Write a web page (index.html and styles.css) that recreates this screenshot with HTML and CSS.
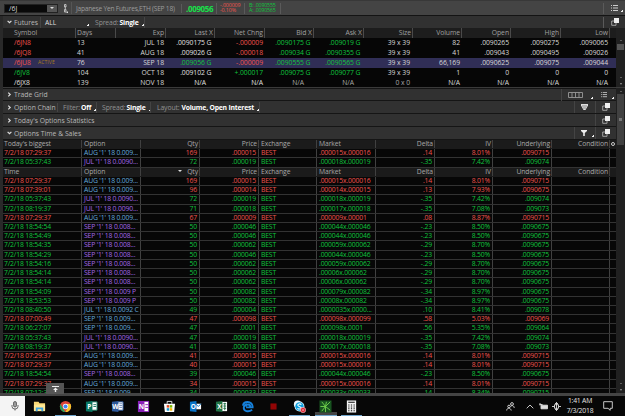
FILE: index.html
```html
<!DOCTYPE html>
<html lang="en">
<head>
  <meta charset="UTF-8" />
  <meta name="viewport" content="width=device-width, initial-scale=1" />
  <title>Options Time &amp; Sales</title>
  <link rel="stylesheet" href="styles.css">
</head>
<body>

<svg class="defs" width="0" height="0">
  <symbol id="popout" viewBox="0 0 8 8"><path d="M.7 3h4.3v4.3H.7z" fill="none" stroke="#bbb" stroke-width=".8"/><path d="M3 0h5v5H3z" fill="#eee"/></symbol>
  <symbol id="list" viewBox="0 0 7 7"><path d="M0 .5h1M2 .5h5M0 3h1M2 3h5M0 5.500h1M2 5.500h5" stroke="#ccc" stroke-width="1"/></symbol>
</svg>

<div class="app">
  <!-- Symbol toolbar -->
  <header class="toolbar">
    <div class="symbol-box"><span>/6J</span><i class="drop"></i></div>
    <div class="link-cell">
      <svg width="5" height="9" viewBox="0 0 5 9"><path d="M1.500 .5h1.500v2.500H1.500zM1.500 5.500h1.500V8H1.500zM2.300 2v4.500" fill="none" stroke="#bbb"/><path d="M5 7v2H3z" fill="#ddd"/></svg>
    </div>
    <div class="instrument">Japanese Yen Futures,ETH (SEP 18)</div>
    <div class="last-price">.009056</div>
    <div class="mini red">-.000009<br>-0.10%</div>
    <div class="mini bidask green">B: .0090555<br>A: .0090565</div>
    <div class="end-tool"><svg width="7" height="7"><use href="#list"/></svg><i class="corner"></i></div>
  </header>

  <!-- Futures -->
  <div class="bar futures-bar">
    <svg class="arrow" width="5" height="4" viewBox="0 0 5 4"><path d="M.6 .8l1.900 1.900L4.400 .8" fill="none" stroke="#ddd" stroke-width="1.200"/></svg>
    <span class="bar-name futures-name">Futures</span>
    <span class="opt all">ALL<i class="corner"></i></span>
    <span class="opt spread">Spread: <b>Single</b><i class="corner"></i></span>
    <div class="end-tool"><svg width="8" height="8"><use href="#popout"/></svg></div>
  </div>
  <section class="futures">
    <div class="futures-table" id="futures"></div>
    <div class="scroll small-scroll"><i class="up"></i><i class="thumb"></i><i class="up low"></i><i class="down"></i></div>
  </section>

  <!-- Collapsible sections -->
  <section class="main">
    <div class="panels">
      <div class="bar">
        <svg class="arrow" width="4" height="5" viewBox="0 0 4 5"><path d="M.8 .6l1.900 1.900L.8 4.400" fill="none" stroke="#ddd" stroke-width="1.200"/></svg>
        <span class="bar-name">Trade Grid</span>
        <div class="tools">
          <div class="tool wide"><svg width="15" height="6" viewBox="0 0 15 6"><path d="M.5 .5h14v5H.5zM4 .5v5M7.500 .5v5M11 .5v5" fill="none" stroke="#999" stroke-width=".9"/></svg><i class="corner"></i></div>
          <div class="tool"><svg width="6" height="6"><use href="#list"/></svg><i class="corner"></i></div>
        </div>
      </div>
      <div class="bar">
        <svg class="arrow" width="4" height="5" viewBox="0 0 4 5"><path d="M.8 .6l1.900 1.900L.8 4.400" fill="none" stroke="#ddd" stroke-width="1.200"/></svg>
        <span class="bar-name chain-name">Option Chain</span>
        <span class="opt filter">Filter: <b>Off</b><i class="corner"></i></span>
        <span class="opt chain-spread">Spread: <b>Single</b><i class="corner"></i></span>
        <span class="opt layout">Layout: <b>Volume, Open Interest</b><i class="corner"></i></span>
        <div class="tools">
          <div class="tool"><svg width="7" height="6" viewBox="0 0 7 6"><path d="M0 0h7v1.500L4.500 6h-2L0 1.500z" fill="#ddd"/><path d="M1 2h5M2 4h3" stroke="#555" stroke-width=".6"/></svg></div>
          <div class="tool"><svg width="8" height="8"><use href="#popout"/></svg></div>
        </div>
      </div>
      <div class="bar">
        <svg class="arrow" width="4" height="5" viewBox="0 0 4 5"><path d="M.8 .6l1.900 1.900L.8 4.400" fill="none" stroke="#ddd" stroke-width="1.200"/></svg>
        <span class="bar-name">Today's Options Statistics</span>
        <div class="tools"><div class="tool"><svg width="8" height="8"><use href="#popout"/></svg></div></div>
      </div>
      <div class="bar">
        <svg class="arrow" width="5" height="4" viewBox="0 0 5 4"><path d="M.6 .8l1.900 1.900L4.400 .8" fill="none" stroke="#ddd" stroke-width="1.200"/></svg>
        <span class="bar-name open-name">Options Time &amp; Sales</span>
        <div class="tools">
          <div class="tool"><svg width="6" height="6" viewBox="0 0 6 6"><path d="M0 0h6v1L3.800 3v3H2.200V3L0 1z" fill="#eee"/></svg><i class="corner"></i></div>
          <div class="tool"><svg width="8" height="8"><use href="#popout"/></svg></div>
        </div>
      </div>
      <div class="sales" id="sales"></div>
    </div>
    <div class="scroll main-scroll"><i class="up"></i><i class="thumb"></i><i class="up low"></i><i class="down"></i></div>
    <div class="dock-btn"><svg width="7" height="6" viewBox="0 0 7 6"><path d="M0 .5h7" stroke="#eee"/><path d="M3.500 1.500L6 4H4.200v2H2.800V4H1z" fill="#eee"/></svg></div>
  </section>
</div>

<!-- Taskbar -->
<footer class="taskbar">
  <div class="mic"><svg width="8" height="10" viewBox="0 0 8 10"><rect x="2.500" y=".5" width="3" height="5.500" rx="1.500" fill="#999" stroke="#444" stroke-width=".7"/><path d="M1 4v1.500a3 2.500 0 0 0 6 0V4M4 8v1.500" fill="none" stroke="#444" stroke-width=".8"/></svg></div>
  <div class="task-icons">
    <div class="task"><svg viewBox="0 0 14 14"><path d="M1 2h5l1 1.500h6V11H1z" fill="#f8d775"/><path d="M1 5h12v7H1z" fill="#ffe793"/><path d="M3 12V8h8v4H9v-2H5v2z" fill="#3fa4e0"/></svg></div>
    <div class="task running"><svg viewBox="0 0 14 14"><circle cx="7" cy="7" r="6" fill="#db4437"/><path d="M1.600 4.200L5 10.400 7 13A6 6 0 0 1 1.600 4.200z" fill="#27a35a"/><path d="M7 4.300h5.400A6 6 0 0 1 7 13l2.500-5z" fill="#f7c52d"/><circle cx="7" cy="7" r="2.900" fill="#fff"/><circle cx="7" cy="7" r="2.200" fill="#4285f4"/></svg></div>
    <div class="task office"><svg viewBox="0 0 14 14"><path d="M7 2h6v9H7z" fill="#fff" stroke="#14775f"/><path d="M1 2l7-1v12l-7-1z" fill="#087561"/><text x="2.500" y="9.500">P</text><path d="M9 5h3M9 7h3" stroke="#14775f"/></svg></div>
    <div class="task office"><svg viewBox="0 0 14 14"><path d="M7 2h6v9H7z" fill="#fff" stroke="#2b579a"/><path d="M1 2l7-1v12l-7-1z" fill="#2b579a"/><text x="1.300" y="9.500">W</text><path d="M9 4h3M9 6h3M9 8h3" stroke="#2b579a" stroke-width=".7"/></svg></div>
    <div class="task office"><svg viewBox="0 0 14 14"><path d="M1 1h12v12H1z" fill="#8a20b8"/><path d="M8 2h4v10H8z" fill="#fff"/><text x="2" y="10">N</text><path d="M9 5h3M9 8h3" stroke="#8a20b8"/></svg></div>
    <div class="task"><svg viewBox="0 0 14 14"><path d="M4.500 4V1.500h5V4" fill="none" stroke="#eee"/><path d="M1 4h12l-1 9H2z" fill="#fff"/><path d="M4 5.500h2.700v2.700H4z" fill="#e34c26"/><path d="M7.300 5.500H10v2.700H7.300z" fill="#7ab800"/><path d="M4 8.800h2.700v2.700H4z" fill="#159bd7"/><path d="M7.300 8.800H10v2.700H7.300z" fill="#f7b500"/></svg></div>
    <div class="task office"><svg viewBox="0 0 14 14"><path d="M7 4h6v6H7z" fill="#fff"/><path d="M7 4l3 3 3-3" fill="none" stroke="#0872c6"/><path d="M1 2l7-1v12l-7-1z" fill="#0872c6"/><text x="2" y="9.500">O</text></svg></div>
    <div class="task office"><svg viewBox="0 0 14 14"><path d="M7 2h6v10H7z" fill="#fff"/><path d="M9 4h3M9 6.500h3M9 9h3M10.500 3v8" stroke="#217346"/><path d="M1 2l7-1v12l-7-1z" fill="#217346"/><text x="2.300" y="9.500">X</text></svg></div>
    <div class="task"><svg viewBox="0 0 14 14"><path d="M2 6c1-5 9.500-5.500 10.500 1v1H5.500M12 10.500C8 13.500 2.500 12 3 8c.3-2 2-3 3.500-3.500M5 7c.5-3 5-3 5 .5" fill="none" stroke="#1681dc" stroke-width="2"/></svg></div>
    <div class="task"><svg viewBox="0 0 14 14"><path d="M3.700 3.700h6.600v6.600H3.700z" fill="#920505"/></svg></div>
    <div class="task running"><svg viewBox="0 0 14 14"><circle cx="5" cy="4.500" r="4" fill="#eef9ff"/><circle cx="7" cy="7" r="5.300" fill="#e8f6fd"/><circle cx="7" cy="7" r="4.500" fill="#0aa0e0"/><path d="M9 5C8 3.800 5 4 5.200 5.700S9 7 8.900 8.600 5.500 10 4.900 8.800" fill="none" stroke="#fff" stroke-width="1.200"/><circle cx="10.800" cy="10.800" r="2.900" fill="#e02a38" stroke="#fff" stroke-width=".5"/><path d="M9.800 10.800h2" stroke="#fff" stroke-width=".8"/></svg></div>
    <div class="task running active"><svg viewBox="0 0 14 14"><path d="M.5 .5h13v13H.5z" fill="#17521f"/><path d="M7 7L3 2M7 7l5-5M7 7l5 4M7 7L3 12M7 7H1.500M7 7v6M7 7l1-5" stroke="#6fd04b" stroke-width="1"/></svg></div>
    <div class="task running"><svg viewBox="0 0 14 14"><path d="M2 .5h10v13H2z" fill="#f4f4f4"/><path d="M3.500 2.300h7M3.500 5.500h1.300M6.300 5.500h1.400M9.200 5.500h1.300M3.500 7.500h1.300M6.300 7.500h1.400M9.200 7.500h1.300M3.500 9.500h1.300M6.300 9.500h1.400M9.200 9.500h1.300M3.500 11.500h1.300M6.300 11.500h1.400M9.200 11.500h1.300" stroke="#111" stroke-width="1.100"/></svg></div>
  </div>
  <div class="tray">
    <svg width="9" height="9" viewBox="0 0 9 9"><circle cx="6" cy="2" r="1.400"/><circle cx="3" cy="4.500" r="1.300"/><path d="M.7 8.500c0-3 4-3 4.500 0M4.700 4.500c1-1.500 3.500-1 3.500 1.500"/></svg>
    <svg class="chev" width="8" height="5" viewBox="0 0 8 5"><path d="M.7 4.300L4 1l3.300 3.300"/></svg>
    <svg width="9" height="7" viewBox="0 0 9 7"><path class="solid" d="M2 2.200h6.500v3.600H2z"/><path d="M.5 1.500h3M1 0v2.500"/></svg>
    <svg class="net" width="9" height="9" viewBox="0 0 9 9"><path d="M4.500 0v9M0 4.500h2.500M6.500 4.500H9M2.500 2.700h4v3.600h-4zM3 1.500h3M3 7.500h3"/></svg>
    <div class="clock">1:41 AM<br>7/3/2018</div>
    <svg width="10" height="10" viewBox="0 0 10 10"><path d="M.7 .7h8.600v6.600H7.200v2L5 7.300H.7z"/></svg>
  </div>
</footer>

<script>
  const futuresHead = ['Symbol', '', 'Days', 'Exp', 'Last X', 'Net Chng', 'Bid X', 'Ask X', 'Size', 'Volume', 'Open', 'High', 'Low'];
  const futuresData = [
    ['/6JN8', 'red', 'white', '13', 'JUL 18', '.0090175 G', '-.000009', '.0090175 G', '.009019 G', '39 x 39', '82', '.0090265', '.0090275', '.0090065'],
    ['/6JQ8', 'red', 'white', '41', 'AUG 18', '.009026 G', '-.000018', '.009034 G', '.0090355 G', '39 x 39', '41', '.009043', '.0090495', '.009026'],
    ['/6JU8', 'red', 'green', '76', 'SEP 18', '.009056 G', '-.000009', '.0090555 G', '.0090565 G', '39 x 39', '66,169', '.0090625', '.009075', '.009044'],
    ['/6JV8', 'green', 'white', '104', 'OCT 18', '.009102 G', '+.000017', '.009075 G', '.009077 G', '39 x 39', '1', '0', '0', '0'],
    ['/6JX8', 'white', 'white', '139', 'NOV 18', 'N/A', 'N/A', 'N/A', 'N/A', '0 x 0', 'N/A', 'N/A', 'N/A', 'N/A']
  ];

  // r = red, g = green; b = call (blue), p = put (purple)
  const biggest = [
    ['r', '7/2/18 07:29:37', 'b', "AUG '1' 18 0.009...", '169', '.000015', '.000015x.000016', '.14', '8.01%', '.0090715'],
    ['g', '7/2/18 05:37:43', 'p', "JUL '1' 18 0.0090...", '72', '.000019', '.000018x.000019', '-.35', '7.42%', '.009074']
  ];
  const sales = [
    ['r', '7/2/18 07:29:37', 'b', "AUG '1' 18 0.009...", '169', '.000015', '.000015x.000016', '.14', '8.01%', '.0090715'],
    ['r', '7/2/18 07:39:01', 'b', "AUG '1' 18 0.009...", '96', '.000014', '.000014x.000015', '.13', '7.93%', '.0090675'],
    ['g', '7/2/18 05:37:43', 'p', "JUL '1' 18 0.0090...", '72', '.000019', '.000018x.000019', '-.35', '7.42%', '.009074'],
    ['g', '7/2/18 08:19:37', 'p', "JUL '1' 18 0.0090...", '71', '.000018', '.000017x.000018', '-.35', '7.08%', '.009073'],
    ['r', '7/2/18 07:29:37', 'b', "AUG '1' 18 0.009...", '67', '.000009', '.000009x.00001', '.08', '8.87%', '.0090715'],
    ['g', '7/2/18 18:54:54', 'p', "SEP '1' 18 0.008...", '50', '.000046', '.000044x.000046', '-.23', '8.50%', '.0090675'],
    ['g', '7/2/18 18:54:49', 'p', "SEP '1' 18 0.008...", '50', '.000046', '.000044x.000046', '-.23', '8.50%', '.0090675'],
    ['g', '7/2/18 18:54:35', 'p', "SEP '1' 18 0.008...", '50', '.000062', '.000059x.000062', '-.29', '8.70%', '.0090675'],
    ['g', '7/2/18 18:54:29', 'p', "SEP '1' 18 0.008...", '50', '.000046', '.000044x.000046', '-.23', '8.50%', '.0090675'],
    ['g', '7/2/18 18:54:16', 'p', "SEP '1' 18 0.008...", '50', '.000062', '.000059x.000062', '-.29', '8.70%', '.0090675'],
    ['g', '7/2/18 18:54:14', 'p', "SEP '1' 18 0.008...", '50', '.000062', '.00006x.000062', '-.29', '8.70%', '.0090675'],
    ['g', '7/2/18 18:54:14', 'p', "SEP '1' 18 0.008...", '50', '.000062', '.00006x.000062', '-.29', '8.70%', '.0090675'],
    ['g', '7/2/18 18:54:09', 'p', "SEP '1' 18 0.009 P", '50', '.000082', '.000079x.000082', '-.34', '8.97%', '.0090675'],
    ['g', '7/2/18 18:53:53', 'p', "SEP '1' 18 0.009 P", '50', '.000082', '.00008x.000082', '-.34', '8.97%', '.0090675'],
    ['g', '7/2/18 08:40:50', 'b', "JUL '1' 18 0.0092 C", '49', '.000004', '.0000035x.0000...', '.10', '8.41%', '.009078'],
    ['r', '7/2/18 07:00:49', 'b', "SEP '1' 18 0.009...", '47', '.000098', '.000098x.000099', '.58', '5.03%', '.009069'],
    ['g', '7/2/18 06:27:07', 'b', "SEP '1' 18 0.009...", '47', '.0001', '.000098x.0001', '.56', '5.35%', '.009064'],
    ['g', '7/2/18 05:37:43', 'p', "JUL '1' 18 0.0090...", '47', '.000019', '.000018x.000019', '-.35', '7.42%', '.009074'],
    ['g', '7/2/18 08:19:37', 'p', "JUL '1' 18 0.0090...", '41', '.000018', '.000017x.000018', '-.35', '7.08%', '.009073'],
    ['r', '7/2/18 07:29:37', 'b', "AUG '1' 18 0.009...", '41', '.000015', '.000015x.000016', '.14', '8.01%', '.0090715'],
    ['r', '7/2/18 07:29:37', 'b', "AUG '1' 18 0.009...", '40', '.000015', '.000015x.000016', '.14', '8.01%', '.0090715'],
    ['g', '7/2/18 18:54:54', 'p', "SEP '1' 18 0.008...", '39', '.000046', '.000044x.000046', '-.23', '8.50%', '.0090675'],
    ['r', '7/2/18 07:29:37', 'b', "AUG '1' 18 0.009...", '34', '.000015', '.000015x.000016', '.14', '8.01%', '.0090715'],
    ['g', '7/2/18 07:12:37', 'b', "SEP '1' 18 0.009...", '34', '.000033', '.000033x.000033', '.14', '8.34%', '.0090715']
  ];

  function futuresRow(d) {
    const active = d[0] === '/6JU8';
    const na = d[5] === 'N/A';
    const last = na ? 'white' : d[2];
    const net = na ? 'white' : (d[6][0] === '-' ? 'red' : 'green');
    const quote = na ? 'grey' : 'green';
    return `<div class="frow${active ? ' selected' : ''}">
      <span class="${d[1]}">${d[0]}</span><span class="tag">${active ? 'ACTIVE' : ''}</span><span>${d[3]}</span><span>${d[4]}</span>
      <span class="quote ${last}">${d[5]}</span><span class="${net}">${d[6]}</span>
      <span class="quote ${quote}">${d[7]}</span><span class="quote ${quote}">${d[8]}</span>
      <span class="${na ? 'grey' : ''}">${d[9]}</span>${d.slice(10).map(v => `<span>${v}</span>`).join('')}
    </div>`;
  }

  function salesHead(title, extra) {
    return `<div class="srow shead"><span>${title}</span><span>Option</span><span>${extra ? '<i class="sort"></i>' : ''}Qty</span><span>Price</span><span>Exchange</span><span>Market</span><span>Delta</span><span>IV</span><span>Underlying</span><span>Condition</span><span>${extra ? '' : '<i class="gear"></i>'}</span></div>`;
  }

  function salesRow(d) {
    return `<div class="srow ${d[0] === 'r' ? 'red' : 'green'}"><span>${d[1]}</span><span class="${d[2] === 'b' ? 'call' : 'put'}">${d[3]}</span><span>${d[4]}</span><span>${d[5]}</span><span>BEST</span><span>${d[6]}</span><span>${d[7]}</span><span>${d[8]}</span><span>${d[9]}</span><span></span><span></span></div>`;
  }

  document.getElementById('futures').innerHTML =
    `<div class="frow fhead">${futuresHead.map(h => `<span>${h}</span>`).join('')}</div>` + futuresData.map(futuresRow).join('');
  document.getElementById('sales').innerHTML =
    salesHead("Today's biggest", false) + biggest.map(salesRow).join('') + salesHead('Time', true) + sales.map(salesRow).join('');
</script>
</body>
</html>
```
FILE: styles.css
```css
* {
  box-sizing: border-box;
}

body {
  margin: 0;
  width: 625px;
  height: 416px;
  overflow: hidden;
  background: #060606;
  color: #d0d0d0;
  font: 6.8px/9px "Open Sans", "Noto Sans", sans-serif;
  white-space: nowrap;
}

svg {
  display: block;
  flex: none;
}

.defs {
  position: absolute;
}

.app {
  height: 396px;
  padding-left: 3px;
  background: #292929;
  border-bottom: 3px solid #444;
  display: flex;
  flex-direction: column;
}

.red { color: #f0544e; }
.green { color: #10c43e; }
.white { color: #e0e0e0; }
.grey { color: #a8a8a8; }
.call { color: #64aade; }
.put { color: #a468e8; }

/* toolbar */
.toolbar {
  flex: none;
  height: 16px;
  margin-left: -3px;
  padding-left: 4px;
  display: flex;
  align-items: center;
  background: #444;
  border-top: 1px solid #383838;
  border-bottom: 1px solid #141414;
}

.symbol-box {
  width: 54px;
  height: 9px;
  padding-left: 4px;
  display: flex;
  justify-content: space-between;
  align-items: center;
  background: #090909;
  border: 1px solid #222;
  color: #ddd;
}

.drop {
  width: 10px;
  height: 7px;
  background: #555;
  display: flex;
  align-items: center;
  justify-content: center;
}

.drop::after,
.sort {
  content: "";
  border: 2px solid transparent;
  border-top-color: #ddd;
  border-bottom: 0;
}

.link-cell {
  width: 14px;
  height: 12px;
  padding: 2px 0 0 5px;
  border-right: 1px solid #555;
}

.instrument {
  width: 110px;
  padding-left: 4px;
  font-size: 6.6px;
  letter-spacing: -0.22px;
  color: #9c9c9c;
  border-right: 1px solid #5a5a5a;
}

.last-price {
  width: 35px;
  padding-left: 4px;
  font-size: 8px;
  font-weight: bold;
  line-height: 11px;
  letter-spacing: -0.35px;
  color: #18e04a;
  border-right: 1px solid #5a5a5a;
}

.mini {
  width: 28px;
  padding-left: 3px;
  font-size: 5.3px;
  line-height: 5.5px;
  letter-spacing: -0.1px;
  border-right: 1px solid #5a5a5a;
}

.bidask {
  width: 36px;
  padding-left: 4px;
  letter-spacing: -0.2px;
}

.end-tool {
  position: relative;
  width: 22px;
  height: 11px;
  margin-left: auto;
  padding-left: 7px;
  display: flex;
  align-items: center;
  border-left: 1px solid #5a5a5a;
}

/* small menu triangle */
.corner {
  width: 2px;
  height: 2px;
  background: linear-gradient(135deg, transparent 40%, #eee 50%);
  margin: 6px 0 0 3px;
}

/* section bars */
.bar {
  flex: none;
  height: 13px;
  padding-left: 4px;
  display: flex;
  align-items: center;
  background: #313131;
  border-bottom: 1px solid #151515;
  color: #b8b8b8;
}

.futures-bar {
  height: 12px;
  border: 0;
}

.arrow {
  width: 5px;
  margin-right: 2px;
}

.opt {
  height: 11px;
  display: flex;
  align-items: center;
  color: #929292;
  letter-spacing: -0.1px;
  border-right: 1px solid #444;
}

.opt b {
  color: #fff;
  margin-left: 1px;
  letter-spacing: -0.2px;
}

.futures-name {
  width: 26px;
}

.all {
  width: 49px;
  padding-left: 4px;
  color: #ddd;
  border-left: 1px solid #444;
  border-right: 0;
  justify-content: space-between;
}

.spread {
  padding-left: 6px;
}

.futures-bar .spread {
  width: 56px;
}

.chain-name {
  width: 44px;
  border-right: 1px solid #444;
}

.filter {
  width: 39px;
  padding-left: 5px;
}

.chain-spread {
  width: 54px;
  padding-left: 5px;
}

.layout {
  padding-left: 6px;
}

.layout b {
  margin-left: 2px;
}

.tools {
  display: flex;
  margin-left: auto;
}

.tool {
  width: 21px;
  height: 12px;
  padding-left: 6px;
  display: flex;
  align-items: center;
  border-left: 1px solid #444;
}

.tool .corner {
  margin-left: 5px;
}

.wide {
  width: 34px;
  padding-left: 6px;
}

.wide .corner {
  margin-left: 8px;
}

.wide + .tool {
  border-left: 0;
}

/* futures table */
.futures {
  flex: none;
  height: 60px;
  display: flex;
  background: #060606;
  border-bottom: 1px solid #3a3a3a;
}

.futures-table {
  width: 613px;
}

.frow {
  height: 10px;
  line-height: 9px;
  display: grid;
  grid-template-columns: 34px 39px 40px 50px 49px 50px 49px 50px 49px 49px 49px 50px 49px;
  color: #d8d8d8;
}

.frow span {
  padding-right: 2px;
  text-align: right;
  letter-spacing: -0.05px;
}

.frow span:nth-child(-n+3) {
  text-align: left;
}

.frow span:first-child {
  padding-left: 11px;
}

.frow span:nth-child(3) {
  padding-left: 1px;
}

.frow span:nth-child(9) {
  padding-right: 3px;
}

.frow .quote {
  padding-right: 3.5px;
}

.frow:last-child .quote {
  padding-right: 10px;
}

.frow:last-child .quote.white {
  padding-right: 9px;
}

.frow .tag {
  padding-left: 1px;
  font-size: 5px;
  color: #a87c20;
  letter-spacing: 0.1px;
}

.fhead {
  background: #1d1d1d;
  color: #a0a0a0;
}

.fhead span {
  padding-right: 1px;
  border-right: 1px solid #4a4a4a;
}

.fhead span:first-child {
  border: 0;
}

.fhead span:nth-child(9) {
  padding-right: 1px;
}

.selected {
  background: #302e56;
}

/* scrollbars */
.scroll {
  width: 9px;
  display: flex;
  flex-direction: column;
  align-items: center;
  background: #202020;
}

.up,
.down {
  border: 1.5px solid transparent;
  border-bottom-color: #999;
  border-top: 0;
}

.down {
  border-top: 2px solid #999;
  border-bottom: 0;
  margin: 5px 0 2px;
}

.low {
  margin-top: auto;
}

.small-scroll {
  padding-top: 12px;
}

.small-scroll .thumb {
  width: 7px;
  height: 6px;
  margin-top: 3px;
  background: #555;
}

.main-scroll {
  padding-top: 3px;
}

.main-scroll .thumb {
  width: 7px;
  height: 51px;
  margin-top: 2px;
  background: linear-gradient(#777, #777) center / 3px 3px no-repeat #414141;
}

/* time and sales */
.main {
  position: relative;
  flex: 1;
  min-height: 0;
  display: flex;
}

.panels {
  width: 613px;
  border-top: 1px solid #151515;
  display: flex;
  flex-direction: column;
  overflow: hidden;
}

.main .bar:first-child {
  height: 12px;
}

.sales {
  flex: 1;
  min-height: 0;
  overflow: hidden;
  background: #070707;
}

.srow {
  height: 9.22px;
  line-height: 8.2px;
  display: grid;
  grid-template-columns: 79px 59px 59px 59px 58px 59px 59px 58px 59px 58px 6px;
  border-bottom: 1px solid #333;
}

.srow span {
  padding: 0 2px 0 1px;
  border-right: 1px solid #404040;
  text-align: right;
  letter-spacing: -0.15px;
}

.srow span:nth-child(1),
.srow span:nth-child(2),
.srow span:nth-child(5),
.srow span:nth-child(6) {
  text-align: left;
  padding-left: 2px;
}

.srow span:nth-child(1) {
  padding-left: 1px;
}

.srow span:last-child {
  padding: 0;
  border: 0;
}

.shead {
  background: #1b1b1b;
  color: #a8a8a8;
  border-color: #1b1b1b;
}

.shead span {
  padding-right: 1px;
  letter-spacing: -0.1px;
}

.sort {
  display: inline-block;
  margin: 0 5px 1.5px 0;
}

.gear {
  display: block;
  width: 4px;
  height: 4px;
  margin: 2px 0 0 1px;
  border: 1px solid #ccc;
  border-radius: 50%;
}

.dock-btn {
  position: absolute;
  left: 43px;
  bottom: -1px;
  width: 18px;
  height: 11px;
  display: flex;
  align-items: center;
  justify-content: center;
  background: #555;
}

/* taskbar */
.taskbar {
  height: 20px;
  display: flex;
  background: #070707;
}

.mic {
  width: 25px;
  display: flex;
  align-items: center;
  justify-content: center;
  padding-left: 4px;
  background: #f4f4f4;
}

.task-icons {
  display: flex;
  padding-left: 1px;
}

.task {
  width: 26.05px;
  height: 20px;
  display: flex;
  justify-content: center;
  padding-top: 4px;
}

.task svg {
  width: 13px;
  height: 13px;
}

.office text {
  font: bold 7px "Open Sans", sans-serif;
  fill: #fff;
}

.running {
  background: linear-gradient(#70a5cc, #70a5cc) center bottom / 21px 1px no-repeat;
}

.active {
  background: linear-gradient(#70a5cc, #70a5cc) center bottom / 22px 1px no-repeat, linear-gradient(#444, #444) center bottom / 22px 4px no-repeat;
}

.tray {
  margin-left: auto;
  padding-right: 12px;
  display: flex;
  align-items: center;
}

.tray path,
.tray circle {
  fill: none;
  stroke: #ddd;
  stroke-width: 0.9;
}

.tray .solid {
  fill: #ddd;
}

.chev {
  margin: 0 5px 0 11px;
}

.net {
  margin-left: 4px;
}

.clock {
  width: 34px;
  margin: 0 6px 0 2px;
  text-align: center;
  line-height: 10px;
  letter-spacing: -0.2px;
  color: #e4e4e4;
}
```
